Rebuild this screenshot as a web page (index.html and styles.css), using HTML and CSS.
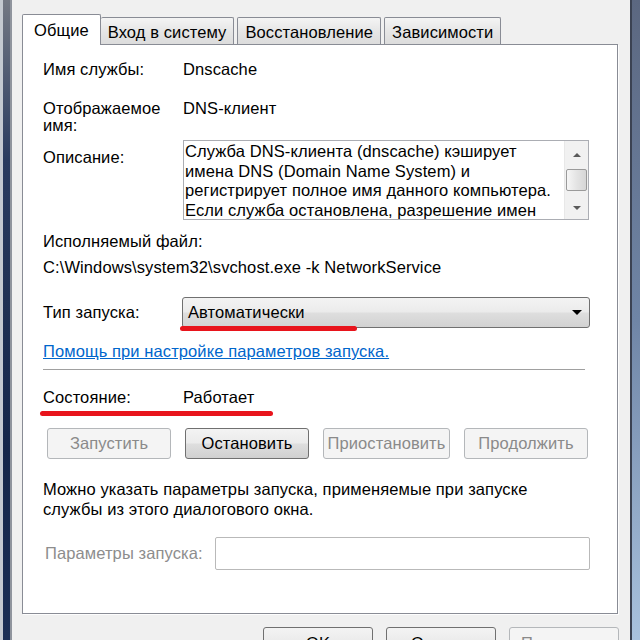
FILE: index.html
```html
<!DOCTYPE html>
<html lang="ru">
<head>
  <meta charset="UTF-8" />
  <meta name="viewport" content="width=device-width, initial-scale=1.0" />
  <title>Свойства: DNS-клиент</title>
  <link rel="stylesheet" href="styles.css">
</head>
<body>
  <div class="screen">
    <div class="frame-left"></div>

    <div class="dialog">
      <div class="tabs">
        <div class="tab active">Общие</div>
        <div class="tab">Вход в систему</div>
        <div class="tab">Восстановление</div>
        <div class="tab">Зависимости</div>
      </div>

      <div class="panel">
        <div class="row first">
          <span class="label">Имя службы:</span>
          <span>Dnscache</span>
        </div>

        <div class="row tight">
          <span class="label">Отображаемое<br>имя:</span>
          <span>DNS-клиент</span>
        </div>

        <div class="row desc-row">
          <span class="label desc-label">Описание:</span>
          <div class="desc-box">
            <div class="desc-text">Служба DNS-клиента (dnscache) кэширует<br>имена DNS (Domain Name System) и<br>регистрирует полное имя данного компьютера.<br>Если служба остановлена, разрешение имен</div>
            <div class="scrollbar">
              <div class="sb-btn up"><span class="arrow-up"></span></div>
              <div class="sb-thumb"></div>
              <div class="sb-space"></div>
              <div class="sb-btn down"><span class="arrow-down"></span></div>
            </div>
          </div>
        </div>

        <div class="exe-label">Исполняемый файл:</div>
        <div class="exe-path">C:\Windows\system32\svchost.exe -k NetworkService</div>

        <div class="row combo-row">
          <span class="label">Тип запуска:</span>
          <div class="combo">
            <span>Автоматически</span>
            <span class="combo-arrow"></span>
          </div>
        </div>

        <a class="help-link">Помощь при настройке параметров запуска.</a>

        <div class="separator"></div>

        <div class="row state-row">
          <span class="label">Состояние:</span>
          <span>Работает</span>
        </div>

        <div class="actions">
          <button class="btn" disabled>Запустить</button>
          <button class="btn">Остановить</button>
          <button class="btn" disabled>Приостановить</button>
          <button class="btn" disabled>Продолжить</button>
        </div>

        <p class="info">Можно указать параметры запуска, применяемые при запуске<br>службы из этого диалогового окна.</p>

        <div class="row params-row">
          <span class="label muted">Параметры запуска:</span>
          <div class="params-input"></div>
        </div>

        <div class="mark mark-startup"></div>
        <div class="mark mark-state"></div>
      </div>

      <div class="footer">
        <button class="btn wide">OK</button>
        <button class="btn wide">Отмена</button>
        <button class="btn wide" disabled>Применить</button>
      </div>
    </div>

    <div class="frame-right"></div>
  </div>
</body>
</html>
```

FILE: styles.css
```css
body {
  margin: 0;
  width: 640px;
  height: 640px;
  overflow: hidden;
  font-family: 'Liberation Sans', Arial, sans-serif;
  font-size: 16.5px;
  letter-spacing: 0.1px;
  color: #000;
}
.screen {
  display: flex;
  height: 640px;
}
.frame-left {
  width: 7px;
  border-left: 3px solid #c4c9d1;
  border-right: 2px solid #8f949d;
  background: linear-gradient(#737884, #2a3b5f 25%, #15264a 70%, #1b2e55);
}
.frame-right {
  width: 8px;
  border-left: 2px solid #3b4252;
  background: linear-gradient(#5b6780, #6f85a6 50%, #a9c2de);
}
.dialog {
  flex: 1;
  background: #f0f0f0;
  padding-top: 14px;
}

/* tabs */
.tabs {
  display: flex;
  align-items: flex-end;
  height: 30px;
  margin-left: 10px;
}
.tab {
  height: 26px;
  line-height: 29px;
  padding: 0 7px;
  border: 1px solid #898c95;
  border-bottom: none;
  border-radius: 2px 2px 0 0;
  background: linear-gradient(#f4f4f4, #e6e6e6 50%, #dcdcdc);
  margin-left: 3px;
}
.tab:nth-child(2) {
  margin-left: 0;
  border-left: none;
}
.tab.active {
  position: relative;
  z-index: 1;
  height: 30px;
  line-height: 31px;
  padding: 0 11px;
  margin: 0 0 -1px 0;
  background: #fff;
}

/* panel */
.panel {
  position: relative;
  box-sizing: border-box;
  width: 596px;
  height: 570px;
  margin-left: 10px;
  padding: 15px 0 0 20px;
  background: #fff;
  border: 1px solid #898c95;
  box-shadow: 1px 1px 0 #fdfdfd;
}
.row {
  display: flex;
  align-items: flex-start;
  line-height: 19px;
}
.label {
  width: 140px;
  flex: none;
}
.tight {
  margin-top: 21px;
  line-height: 17px;
}
.desc-row {
  margin-top: 6px;
}
.desc-label {
  padding-top: 8px;
}
.desc-box {
  display: flex;
  box-sizing: border-box;
  width: 406px;
  height: 80px;
  border: 1px solid #abadb3;
  overflow: hidden;
}
.desc-text {
  flex: 1;
  padding: 1px 0 0 1px;
  line-height: 19.5px;
  white-space: nowrap;
}
.scrollbar {
  width: 23px;
  display: flex;
  flex-direction: column;
  background: #f1f1f1;
  border-left: 1px solid #e8e8e8;
}
.sb-btn {
  display: flex;
  justify-content: center;
  align-items: center;
}
.sb-btn.up { height: 28px; }
.sb-btn.down { height: 22px; }
.arrow-up, .arrow-down {
  width: 0;
  height: 0;
  border-left: 4px solid transparent;
  border-right: 4px solid transparent;
}
.arrow-up { border-bottom: 4px solid #5a5a5a; }
.arrow-down { border-top: 4px solid #5a5a5a; }
.sb-thumb {
  height: 20px;
  margin: 0 1px;
  border: 1px solid #9a9a9a;
  border-radius: 2px;
  background: linear-gradient(to right, #f6f6f6, #e4e4e4 50%, #d6d6d6);
}
.sb-space { flex: 1; }

.exe-label {
  margin-top: 12px;
  line-height: 19px;
}
.exe-path {
  margin-top: 7px;
  line-height: 19px;
}

/* combo */
.combo-row {
  margin-top: 20px;
  align-items: center;
}
.combo-row .label { width: 139px; }
.combo {
  box-sizing: border-box;
  width: 408px;
  height: 31px;
  padding: 0 7px 0 5px;
  display: flex;
  align-items: center;
  justify-content: space-between;
  border: 1px solid #707070;
  border-radius: 3px;
  background: linear-gradient(#f3f3f3, #ebebeb 48%, #dedede 52%, #d2d2d2);
}
.combo-arrow {
  width: 0;
  height: 0;
  border-left: 5px solid transparent;
  border-right: 5px solid transparent;
  border-top: 5px solid #000;
}

.help-link {
  display: block;
  margin-top: 14px;
  line-height: 19px;
  color: #0066cc;
  text-decoration: underline;
  cursor: pointer;
}
.separator {
  width: 542px;
  height: 1px;
  margin-top: 8px;
  background: #a0a0a0;
}
.state-row {
  margin-top: 18px;
}

/* buttons */
.actions {
  display: flex;
  gap: 14px;
  margin: 21px 0 0 4px;
}
.btn {
  box-sizing: border-box;
  height: 31px;
  width: 124px;
  font-family: inherit;
  font-size: 16.5px;
  letter-spacing: 0.1px;
  color: #000;
  border: 1px solid #707070;
  border-radius: 3px;
  background: linear-gradient(#f3f3f3, #ebebeb 48%, #dedede 52%, #d0d0d0);
  padding: 0;
}
.btn:disabled {
  color: #8a8a8a;
  border-color: #b4b7ba;
  background: #f4f4f4;
}
.actions .btn:nth-child(3) { width: 127px; }

.info {
  margin: 20px 0 0;
  line-height: 20px;
  white-space: nowrap;
}
.params-row {
  margin-top: 18px;
  align-items: center;
}
.params-row .label { width: 172px; }
.muted {
  color: #8d8d8d;
  padding-left: 2px;
  width: 170px !important;
}
.params-input {
  box-sizing: border-box;
  width: 375px;
  height: 33px;
  border: 1px solid #b9b9b9;
  border-radius: 2px;
  background: #fff;
}

/* red hand-drawn marks over the screenshot */
.mark {
  position: absolute;
  height: 5px;
  border-radius: 3px;
  background: #e8141c;
}
.mark-startup {
  left: 157px;
  top: 281px;
  width: 177px;
}
.mark-state {
  left: 17px;
  top: 366px;
  width: 233px;
}

.footer {
  display: flex;
  justify-content: flex-end;
  gap: 13px;
  margin-top: 13px;
  padding-right: 11px;
}
.btn.wide {
  width: 110px;
  height: 30px;
  line-height: 30px;
  vertical-align: top;
}
```
